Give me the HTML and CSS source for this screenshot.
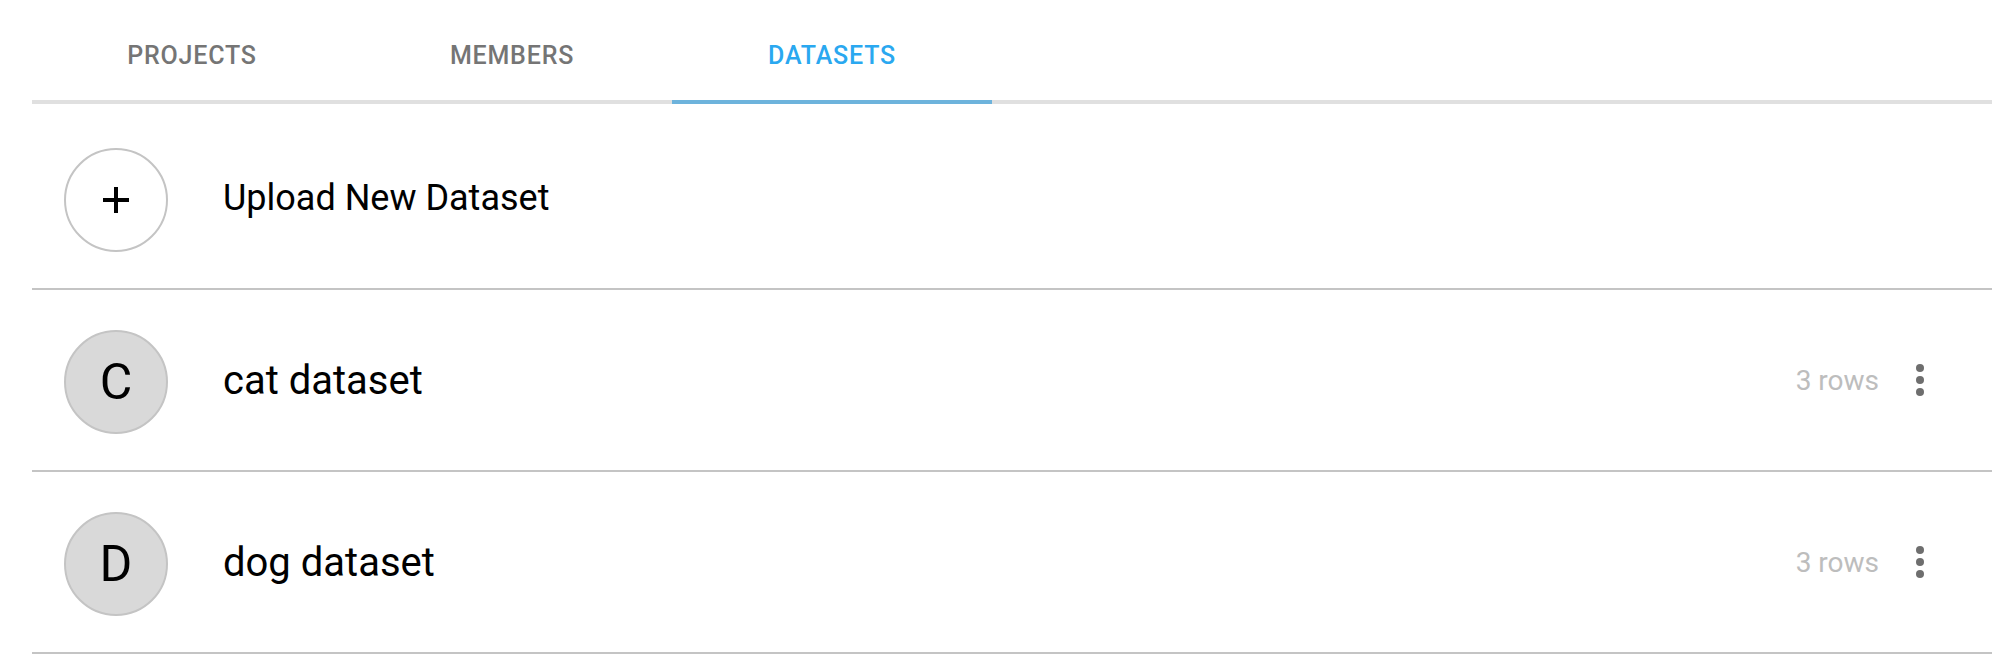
FILE: index.html
```html
<!DOCTYPE html>
<html lang="en">
<head>
  <meta charset="UTF-8">
  <title>Datasets</title>
  <link rel="stylesheet" href="styles.css">
</head>
<body>
  <div class="container">
    <nav class="tabs">
      <div class="tab">PROJECTS</div>
      <div class="tab">MEMBERS</div>
      <div class="tab active">DATASETS</div>
    </nav>

    <ul class="list">
      <li class="row">
        <div class="avatar upload">
          <svg width="26" height="26" viewBox="0 0 26 26"><path d="M13 0v26M0 13h26" stroke="#000" stroke-width="4"/></svg>
        </div>
        <div class="label upload-label">Upload New Dataset</div>
      </li>
      <li class="row">
        <div class="avatar">C</div>
        <div class="label">cat dataset</div>
        <div class="meta">3 rows</div>
        <svg class="more" width="8" height="32" viewBox="0 0 8 32"><circle cx="4" cy="4" r="4"/><circle cx="4" cy="16" r="4"/><circle cx="4" cy="28" r="4"/></svg>
      </li>
      <li class="row">
        <div class="avatar">D</div>
        <div class="label">dog dataset</div>
        <div class="meta">3 rows</div>
        <svg class="more" width="8" height="32" viewBox="0 0 8 32"><circle cx="4" cy="4" r="4"/><circle cx="4" cy="16" r="4"/><circle cx="4" cy="28" r="4"/></svg>
      </li>
    </ul>
  </div>
</body>
</html>
```

FILE: styles.css
```css
body {
  margin: 0;
  font-family: Roboto, 'Liberation Sans', sans-serif;
  background: #fff;
  color: #000;
}
.container {
  margin: 0 16px 0 32px;
}
.tabs {
  display: flex;
  height: 100px;
  border-bottom: 4px solid #e0e0e0;
}
.tab {
  width: 320px;
  display: flex;
  align-items: center;
  justify-content: center;
  padding-top: 11px;
  box-sizing: border-box;
  height: 104px;
  margin-bottom: -4px;
  border-bottom: 4px solid transparent;
  font-size: 25px;
  font-weight: 500;
  letter-spacing: 0.8px;
  color: #757575;
}
.tab.active {
  color: #2aa8f0;
  border-bottom-color: #6db3dc;
}
.list {
  list-style: none;
  margin: 4px 0 0;
  padding: 0;
}
.row {
  display: flex;
  align-items: center;
  height: 180px;
  border-bottom: 2px solid #c4c4c4;
  padding: 0 72px 0 32px;
}
.avatar {
  width: 104px;
  height: 104px;
  box-sizing: border-box;
  border-radius: 50%;
  border: 2px solid #c4c4c4;
  background: #d9d9d9;
  display: flex;
  align-items: center;
  justify-content: center;
  font-size: 50px;
  margin-top: 3px;
  flex-shrink: 0;
}
.avatar.upload {
  background: #fff;
}
.label {
  margin-left: 55px;
  font-size: 40px;
  flex: 1;
}
.upload-label {
  font-size: 36px;
}
.meta {
  font-size: 28px;
  color: #bdbdbd;
  margin-right: 37px;
}
.more {
  fill: #6e6e6e;
  margin-right: -4px;
}
```
